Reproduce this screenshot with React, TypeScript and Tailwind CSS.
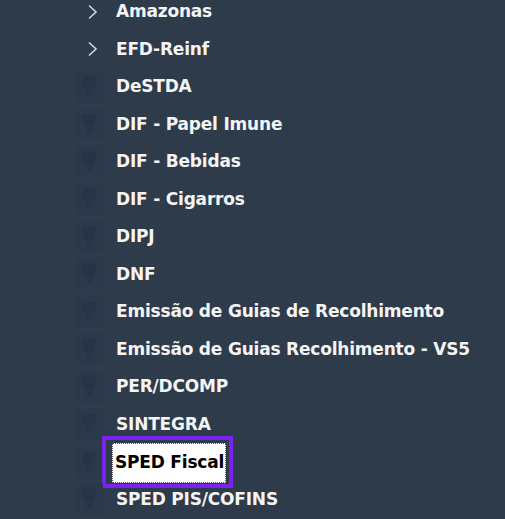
import React from 'react';

type Item = { label: string; branch?: boolean; selected?: boolean };

const items: Item[] = [
  { label: 'Amazonas', branch: true },
  { label: 'EFD-Reinf', branch: true },
  { label: 'DeSTDA' },
  { label: 'DIF - Papel Imune' },
  { label: 'DIF - Bebidas' },
  { label: 'DIF - Cigarros' },
  { label: 'DIPJ' },
  { label: 'DNF' },
  { label: 'Emissão de Guias de Recolhimento' },
  { label: 'Emissão de Guias Recolhimento - VS5' },
  { label: 'PER/DCOMP' },
  { label: 'SINTEGRA' },
  { label: 'SPED Fiscal', selected: true },
  { label: 'SPED PIS/COFINS' },
];

function Chevron() {
  return (
    <svg width="12" height="16" viewBox="0 0 12 16" fill="none">
      <path d="M2 1.5 L9 8 L2 14.5" stroke="#d6d6d6" strokeWidth="1.6" />
    </svg>
  );
}

function LeafIcon() {
  // faint dithered icon, nearly lost in the dark background
  return (
    <svg width="32" height="36" viewBox="0 0 32 36">
      <rect x="2" y="2" width="28" height="32" fill="#2a394b" />
      <path d="M9 9 Q16 6 23 9 L22 18 Q16 24 10 18 Z" fill="#253446" />
      <path d="M12 20 L20 20 L18 28 L14 28 Z" fill="#263547" />
    </svg>
  );
}

export default function App() {
  return (
    <div
      className="w-[505px] h-[519px] bg-[#2d3b4b] overflow-hidden"
      style={{ fontFamily: 'Tahoma, "DejaVu Sans", sans-serif' }}
    >
      <div className="-mt-[7px] flex flex-col">
        {items.map((item) => (
          <div key={item.label} className="h-[37.5px] flex items-center">
            <div className="w-[72px] shrink-0" />
            <div className="w-[34px] shrink-0 flex items-center justify-center">
              {item.branch ? <div className="ml-[8px]"><Chevron /></div> : <LeafIcon />}
            </div>
            {item.selected ? (
              <div className="-ml-[4px] border-[4px] border-[#7a22f0] pl-[6px] pr-[3px] pt-[3px] pb-[1px]">
                <div className="bg-white border border-dotted border-[#555] pl-[2px] pr-[1px] h-[40px] flex items-center">
                  <span className="text-[17px] font-bold text-black tracking-[-0.2px]">
                    {item.label}
                  </span>
                </div>
              </div>
            ) : (
              <span className="ml-[10px] text-[17px] font-bold text-[#f4f4f4] tracking-[-0.2px]">
                {item.label}
              </span>
            )}
          </div>
        ))}
      </div>
    </div>
  );
}
